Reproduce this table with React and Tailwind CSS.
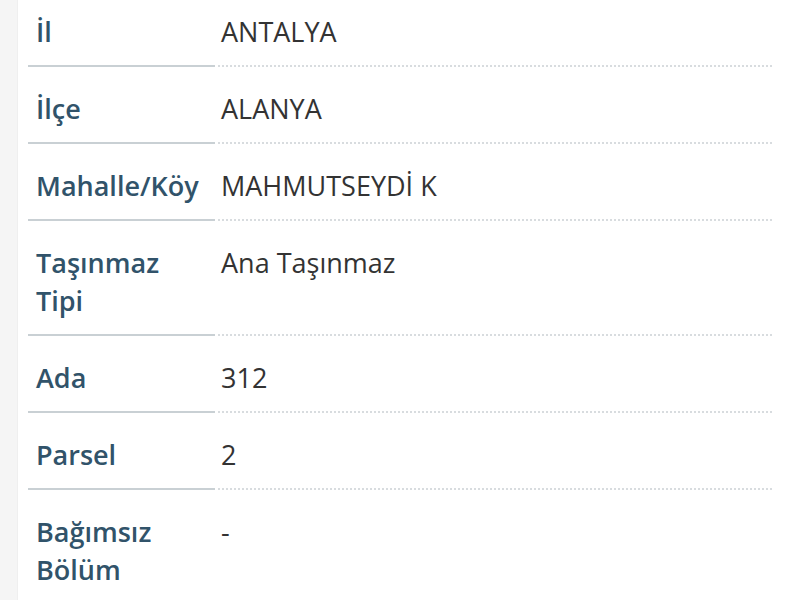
import React from 'react'

const rows = [
  { label: ['İl'], value: 'ANTALYA' },
  { label: ['İlçe'], value: 'ALANYA' },
  { label: ['Mahalle/Köy'], value: 'MAHMUTSEYDİ K' },
  { label: ['Taşınmaz', 'Tipi'], value: 'Ana Taşınmaz' },
  { label: ['Ada'], value: '312' },
  { label: ['Parsel'], value: '2' },
  { label: ['Bağımsız', 'Bölüm'], value: '-', last: true },
]

export default function App() {
  return (
    <div className="w-[800px] h-[600px] overflow-hidden bg-white flex" style={{ fontFamily: '"Open Sans", sans-serif' }}>
      <div className="w-[18px] shrink-0 bg-[#f5f5f5] border-r border-[#efefef]" />
      <div className="flex-1 pl-[10px] pr-[28px] -mt-[10px]">
        {rows.map((row, i) => (
          <div key={i} className="flex">
            <div className={`w-[187px] shrink-0 pl-2 pt-[23px] pb-[14px] text-[27px] leading-[38px] font-semibold text-[#31536a] whitespace-nowrap ${row.last ? '' : 'border-b-2 border-[#c9d0d4]'}`}>
              {row.label.map(l => <div key={l}>{l}</div>)}
            </div>
            <div className={`flex-1 ml-[3px] pl-[3px] pt-[23px] pb-[14px] text-[27px] leading-[38px] text-[#333] ${row.last ? '' : 'border-b-2 border-dotted border-[#d8dcdf]'}`}>
              {row.value}
            </div>
          </div>
        ))}
      </div>
    </div>
  )
}
